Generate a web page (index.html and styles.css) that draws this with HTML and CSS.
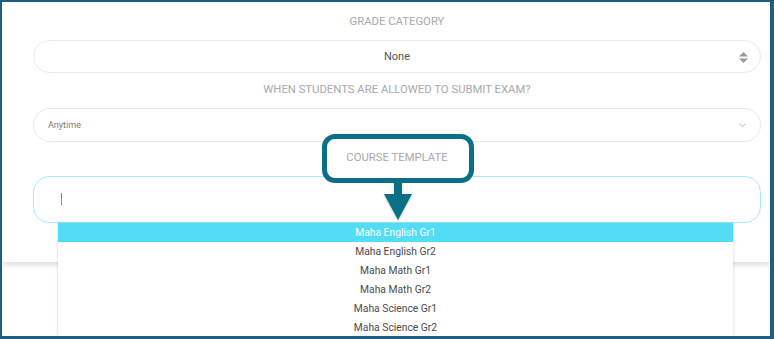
FILE: index.html
```html
<!DOCTYPE html>
<html>
<head>
<meta charset="utf-8">
<link rel="stylesheet" href="styles.css">
</head>
<body>
<div class="frame">
  <div class="card">
    <div class="label">GRADE CATEGORY</div>
    <div class="select select-center">
      <span class="sel-text">None</span>
      <svg class="updown" width="9" height="11" viewBox="0 0 9 11"><path d="M4.5 0 L9 4.4 H0 Z M0 6.6 H9 L4.5 11 Z" fill="#9a9a9a"/></svg>
    </div>
    <div class="label">WHEN STUDENTS ARE ALLOWED TO SUBMIT EXAM?</div>
    <div class="select select-left">
      <span class="sel-small">Anytime</span>
      <svg class="chev" width="7" height="5" viewBox="0 0 7 5"><path d="M0.6 0.8 L3.5 3.8 L6.4 0.8" fill="none" stroke="#b5b5b5" stroke-width="1"/></svg>
    </div>
    <div class="label label-top">COURSE TEMPLATE</div>
    <div class="input"><span class="caret"></span></div>
  </div>
  <ul class="menu">
    <li class="active">Maha English Gr1</li>
    <li>Maha English Gr2</li>
    <li>Maha Math Gr1</li>
    <li>Maha Math Gr2</li>
    <li>Maha Science Gr1</li>
    <li>Maha Science Gr2</li>
  </ul>
  <div class="callout"></div>
  <svg class="arrow" width="30" height="42" viewBox="0 0 30 42"><path d="M11 0 H19 V14 H29 L15 40 L1 14 H11 Z" fill="#0b6f86"/></svg>
</div>
</body>
</html>
```
FILE: styles.css
```css
* { box-sizing: border-box; }
html, body { margin: 0; padding: 0; background: #fff; }
body { font-family: Roboto, "Liberation Sans", sans-serif; }
.frame {
  position: relative;
  width: 774px;
  height: 339px;
  border: solid #1e5e82;
  border-width: 2px 4px 3px 2px;
  overflow: hidden;
  background: #fff;
}
.card {
  height: 260px;
  background: #fff;
  box-shadow: 0 3px 5px rgba(0,0,0,0.13);
  padding: 13px 9px 0 31px;
  display: flex;
  flex-direction: column;
  position: relative;
}
.label {
  text-align: center;
  font-size: 11.3px;
  line-height: 14px;
  color: #a9a9a9;
  height: 14px;
}
.label-top { position: relative; z-index: 3; }
.select {
  border: 1px solid #e9e9e9;
  border-radius: 17px;
  display: flex;
  align-items: center;
  position: relative;
}
.select-center {
  height: 33px;
  margin: 11px 0 10px;
  justify-content: center;
}
.sel-text { font-size: 11px; color: #555; }
.updown { position: absolute; right: 12px; top: 11px; }
.select-left {
  height: 34px;
  margin: 11px 0 9px;
  padding-left: 14px;
}
.sel-small { font-size: 9px; color: #7a7a7a; }
.chev { position: absolute; right: 14px; top: 14px; }
.input {
  height: 47px;
  margin-top: 11px;
  border: 1px solid #a8ebf9;
  border-radius: 16px;
  position: relative;
  z-index: 1;
  background: #fff;
}
.caret {
  position: absolute;
  left: 27px;
  top: 16px;
  width: 1px;
  height: 12px;
  background: #8a8a8a;
}
.menu {
  position: absolute;
  left: 56px;
  top: 221px;
  width: 675px;
  margin: 0;
  padding: 0;
  list-style: none;
  background: #fff;
  box-shadow: 0 0 3px rgba(0,0,0,0.18);
  z-index: 2;
}
.menu li {
  height: 19px;
  line-height: 19px;
  text-align: center;
  font-size: 10.3px;
  color: #4a4a4a;
}
.menu li.active { background: #53dcf6; color: #fff; }
.callout {
  position: absolute;
  left: 320px;
  top: 132px;
  width: 152px;
  height: 49px;
  border: 5px solid #0b6f86;
  border-radius: 13px;
  background: #fff;
  z-index: 2;
}
.arrow {
  position: absolute;
  left: 381px;
  top: 178px;
  z-index: 4;
  filter: drop-shadow(0 1px 1px rgba(0,0,0,0.25));
}
```
